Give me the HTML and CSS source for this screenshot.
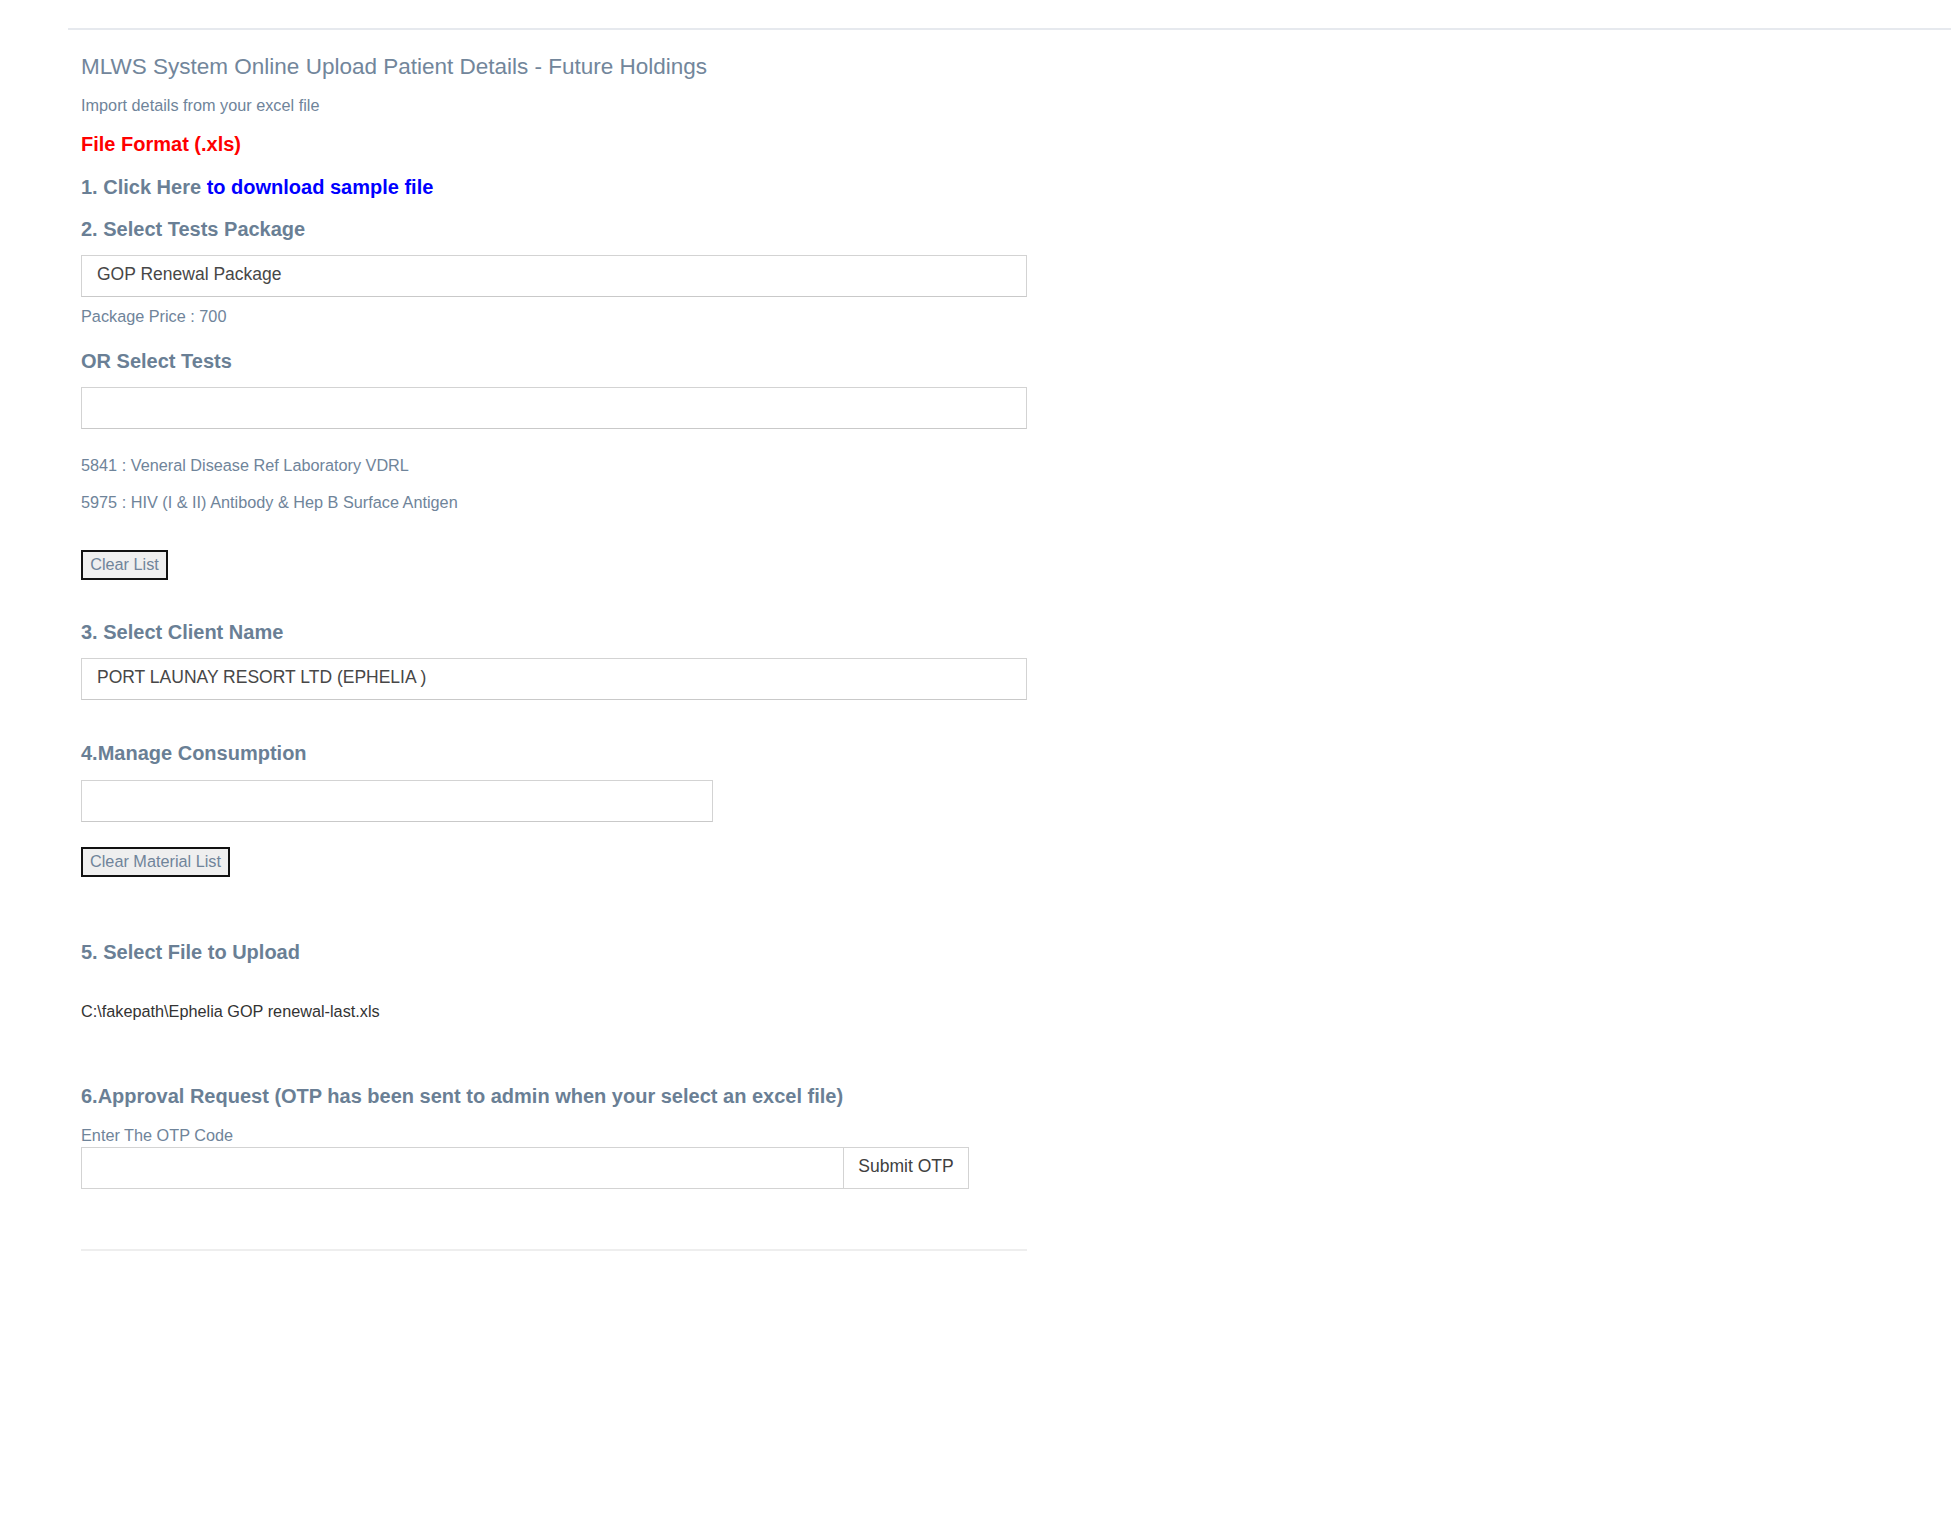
FILE: index.html
```html
<!DOCTYPE html>
<html>
<head>
<meta charset="utf-8">
<title>MLWS Upload</title>
<link rel="stylesheet" href="styles.css">
</head>
<body>
<div class="topbar"></div>
<div class="content">
  <h1 class="title">MLWS System Online Upload Patient Details - Future Holdings</h1>
  <p class="subtitle">Import details from your excel file</p>
  <p class="format">File Format (.xls)</p>
  <h4 class="step step-1">1. Click Here <a href="#" class="dl">to download sample file</a></h4>

  <h4 class="step step-2">2. Select Tests Package</h4>
  <div class="field field-1">GOP Renewal Package</div>
  <p class="note price">Package Price : 700</p>

  <h4 class="step step-or">OR Select Tests</h4>
  <div class="field field-2"></div>
  <p class="note test-a">5841 : Veneral Disease Ref Laboratory VDRL</p>
  <p class="note test-b">5975 : HIV (I &amp; II) Antibody &amp; Hep B Surface Antigen</p>
  <button class="btn btn-clear">Clear List</button>

  <h4 class="step step-3">3. Select Client Name</h4>
  <div class="field field-3">PORT LAUNAY RESORT LTD (EPHELIA )</div>

  <h4 class="step step-4">4.Manage Consumption</h4>
  <div class="field field-4"></div>
  <button class="btn btn-material">Clear Material List</button>

  <h4 class="step step-5">5. Select File to Upload</h4>
  <p class="filepath">C:\fakepath\Ephelia GOP renewal-last.xls</p>

  <h4 class="step step-6">6.Approval Request (OTP has been sent to admin when your select an excel file)</h4>
  <p class="note otp-label">Enter The OTP Code</p>
  <div class="otp-group">
    <div class="otp-input"></div>
    <button class="otp-btn">Submit OTP</button>
  </div>
  <hr class="rule">
</div>
</body>
</html>
```

FILE: styles.css
```css
html, body {
  margin: 0;
  padding: 0;
  background: #ffffff;
}
body {
  font-family: "Liberation Sans", Arial, Helvetica, sans-serif;
  color: #6f849a;
}
.topbar {
  margin-left: 68px;
  height: 28px;
  border-bottom: 2px solid #e6e9ee;
}
.content {
  padding-left: 81px;
  width: 946px;
}
.title {
  margin: 22px 0 0;
  font-size: 22.5px;
  line-height: 30px;
  font-weight: normal;
  color: #72869b;
}
.subtitle {
  margin: 11.5px 0 0;
  font-size: 16.25px;
  line-height: 22px;
}
.format {
  margin: 15.5px 0 0;
  font-size: 20px;
  line-height: 26px;
  font-weight: bold;
  color: #ff0000;
}
.step {
  margin: 0;
  font-size: 20px;
  line-height: 26px;
  font-weight: bold;
  color: #6a7f95;
}
.dl {
  color: #0000ff;
  text-decoration: none;
}
.step-1 { margin-top: 17px; }
.step-2 { margin-top: 16px; }
.step-or { margin-top: 21px; }
.step-3 { margin-top: 39px; }
.step-4 { margin-top: 40px; }
.step-5 { margin-top: 62px; }
.step-6 { margin-top: 61px; }

.field {
  box-sizing: border-box;
  height: 42px;
  border: 1px solid #d3d3d3;
  border-bottom-color: #c9c9c9;
  padding: 0 15px;
  font-size: 17.5px;
  line-height: 37px;
  color: #474747;
  margin-top: 13px;
}
.field-4 {
  width: 632px;
  margin-top: 14px;
}
.note {
  margin: 0;
  font-size: 16.25px;
  line-height: 22px;
}
.price { margin-top: 8px; }
.test-a { margin-top: 25px; }
.test-b { margin-top: 15px; }
.otp-label { margin-top: 15px; }

.btn {
  display: block;
  box-sizing: border-box;
  height: 30px;
  padding: 0 7px 3px;
  border: 2px solid #111111;
  background: #efefef;
  font-family: "Liberation Sans", Arial, sans-serif;
  font-size: 16.25px;
  line-height: 22px;
  color: #6f849a;
}
.btn-clear { margin-top: 37px; width: 87px; }
.btn-material { margin-top: 25px; width: 149px; }

.filepath {
  margin: 35px 0 0;
  font-size: 16.25px;
  line-height: 22px;
  color: #333333;
}
.otp-group {
  display: flex;
  width: 889px;
  height: 42px;
  margin-top: 1px;
}
.otp-input {
  box-sizing: border-box;
  width: 763px;
  height: 42px;
  border: 1px solid #d3d3d3;
}
.otp-btn {
  box-sizing: border-box;
  width: 126px;
  height: 42px;
  margin-left: -1px;
  border: 1px solid #d3d3d3;
  background: #ffffff;
  font-family: "Liberation Sans", Arial, sans-serif;
  font-size: 17.5px;
  color: #404040;
  padding: 0 0 4px;
}
.rule {
  margin: 60px 0 0;
  border: 0;
  border-top: 2px solid #eeeeee;
  height: 0;
}
```
